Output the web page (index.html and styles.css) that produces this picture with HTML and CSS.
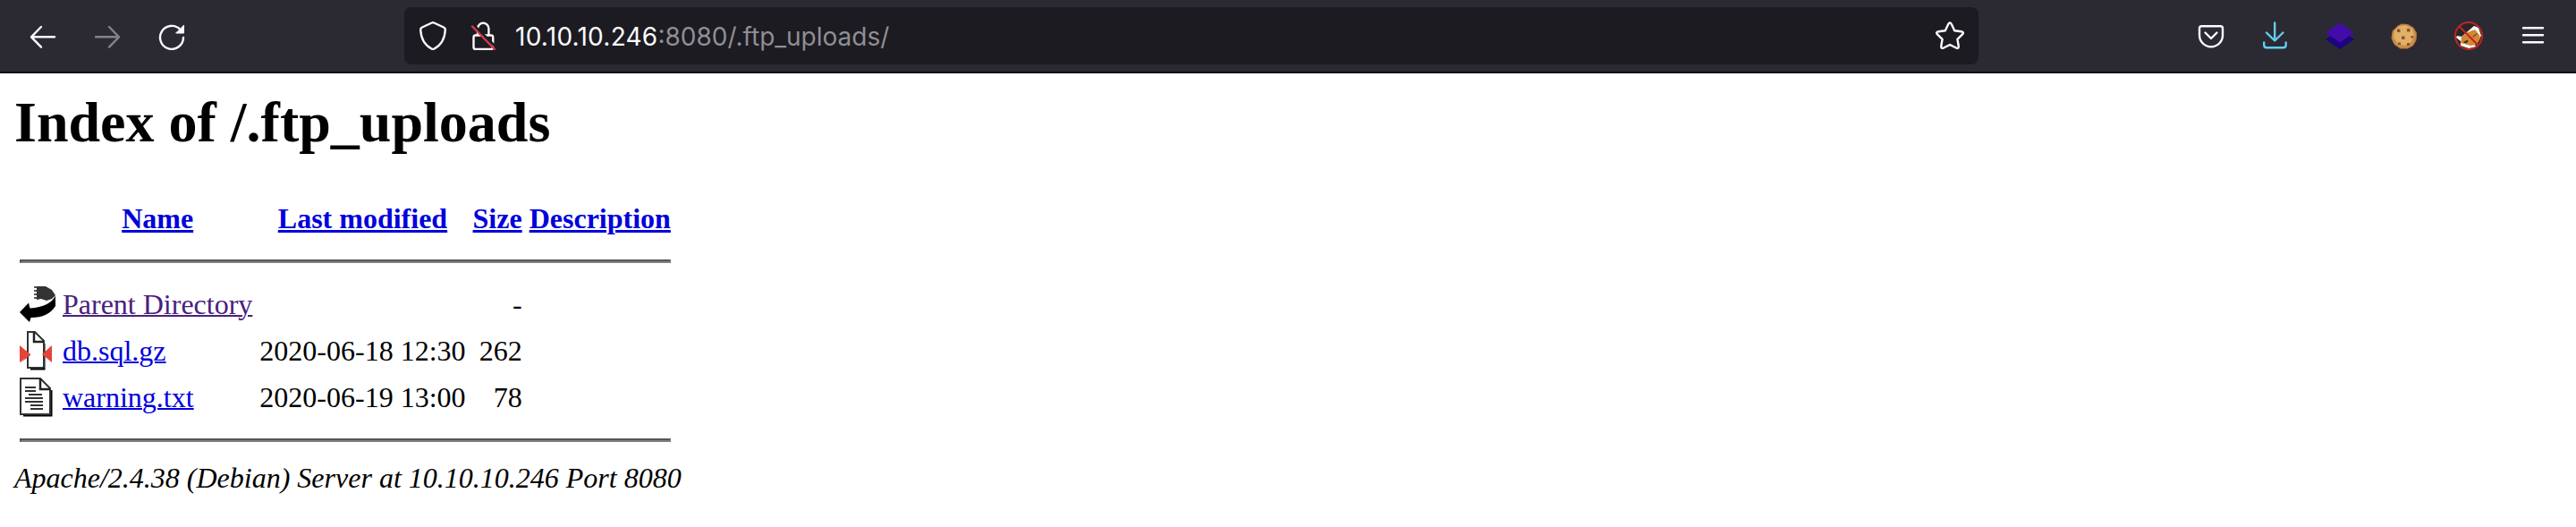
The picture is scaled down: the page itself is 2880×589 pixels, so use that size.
FILE: index.html
```html
<!DOCTYPE html>
<html lang="en">
<head>
<meta charset="utf-8">
<title>Index of /.ftp_uploads</title>
<link rel="stylesheet" href="styles.css">
</head>
<body>
<header class="toolbar">
  <nav class="nav-buttons">
    <svg class="icon" viewBox="0 0 32 32"><path d="M29 17.300H3.500M14 6 3 17.300l11 11.300"/></svg>
    <svg class="icon disabled" viewBox="0 0 32 32"><path d="M3 17.300h25.500M18 6 29 17.300 18 28.600"/></svg>
    <svg class="icon" viewBox="0 0 32 32"><path d="M25.500 9A13 13 0 1 0 29 18"/><path class="solid" d="M29.500 4.500V13h-8.500z"/></svg>
  </nav>
  <div class="urlbar">
    <svg class="icon" viewBox="0 0 32 32"><path d="M14.800 1.500q1.200-.6 2.400 0L28 6.500q2 1 1.800 3C29.300 18.500 25 26.500 17.500 30.500q-1.500.8-3 0C7 26.500 2.700 18.500 2.200 9.500Q2 7.500 4 6.500z"/></svg>
    <svg class="icon lock" viewBox="0 0 32 32"><path d="M10 15.500V8a6.200 6.200 0 0 1 12.400 0v7.500M8 15.500h17q2.200 0 2.200 2.200v11.100q0 2.200-2.200 2.200H7.700q-2.200 0-2.200-2.200V17.700q0-2.200 2.200-2.200"/><path class="gap" d="M6 4.500 31 29"/><path class="slash" d="M4 5.500 29 31"/></svg>
    <span class="url"><span class="host">10.10.10.246</span>:8080/.ftp_uploads/</span>
    <svg class="icon star" viewBox="0 0 32 32"><path d="M14.200 3q1.800-3 3.600 0l3.400 7.200 7.600 1q3.400.6 1.200 3.200l-5.600 5.400 1.300 7.500q.4 3.600-2.700 2.200L16 26l-7 3.500q-3.100 1.400-2.700-2.200l1.300-7.500L2 14.400q-2.200-2.600 1.200-3.200l7.600-1z"/></svg>
  </div>
  <div class="actions">
    <svg class="icon" viewBox="0 0 32 32"><path d="M5.500 5.300h21q2.500 0 2.500 2.500v7.500a13 13 0 0 1-26 0V7.800q0-2.500 2.500-2.500zM9.500 12.500l6.500 6.500 6.500-6.500"/></svg>
    <svg class="icon download" viewBox="0 0 32 32"><path d="M15.200 1.500v19.500M6 12.500l9.200 9 9.200-9M3.200 23.500v2.700q0 3 3 3h18.500q3 0 3-3v-2.700"/></svg>
    <svg class="icon" viewBox="0 0 32 32"><path class="layer-low" d="M0 20 16 9l16 11-16 11z"/><path class="layer-top" d="M0 12.500 16 1.500l16 11-16 11z"/></svg>
    <svg class="icon" viewBox="0 0 32 32"><path class="cookie" d="M9 5 13 3l7 .5L26 7l3.500 6-.5 8-3.500 6-6 3h-8L5 25.500 2 19l1-8z"/><path class="cookie-light" d="M9 6 17 4l8 4 2 7-3 8-8 4-8-3-4-7 1-6z"/><path class="chips" d="M8 8.500h3.500V12H8zM19 8h3.500v3.500H19zM13 16.500h3.500V20H13zM23.500 16H26v2.500h-2.500zM9 23.500h3V26H9zM19 24h3v3h-3z"/></svg>
    <svg class="icon" viewBox="0 0 32 32"><circle class="fox-bg" cx="16" cy="16" r="14"/><path class="white" d="M22 5 27 7l3 9-6 8 2 4-10 2-9-3 0-5-5-4 1-2 5 1z"/><path class="fur" d="M8 17l7-5 8-3 5 6 1 4-4 7-7 1-11-3z"/><path class="eyes" d="M11 23l4-2-1 2.500zM21 17l4-3M24 26h2v1h-2z"/><circle class="ban" cx="16" cy="16" r="15"/><path class="ban" d="m6 6 20 20"/></svg>
    <svg class="icon" viewBox="0 0 32 32"><path class="menu" d="M5 7.200h22M5 15.200h22M5 23.200h22"/></svg>
  </div>
</header>
<main class="page">
  <h1>Index of /.ftp_uploads</h1>
  <table>
    <tr><th><div class="file-icon"></div></th><th><a href="#">Name</a></th><th><a href="#">Last modified</a></th><th><a href="#">Size</a></th><th><a href="#">Description</a></th></tr>
    <tr><th colspan="5"><hr></th></tr>
    <tr>
      <td><svg class="file-icon" viewBox="0 0 40 44"><path class="back-shade" d="M19 2 29 2 36 6 40 12 36 16 30 18 24 16 19 17z"/><path class="back-dots" d="M17.500 2v16"/><path d="M0 31 10 20.500 11.500 26.500Q34 25 40 12.500V24Q32 37 12.500 37L11 42z"/></svg></td>
      <td><a class="visited" href="#">Parent Directory</a></td><td>&nbsp;</td><td class="num">-</td><td>&nbsp;</td>
    </tr>
    <tr>
      <td><svg class="file-icon" viewBox="0 0 40 44"><path class="shadow" d="M12 42h15V14"/><path class="sheet" d="M9 1h8l10 10v29l-1 1H9z"/><path class="fold" d="M16 1v11h11"/><path class="arrow-shade" d="M0 36l12-9v-2zM36 36l-11-9z"/><path class="arrow" d="M0 16 12 26 0 35zM36 16 25 26l11 9z"/></svg></td>
      <td><a href="#">db.sql.gz</a></td><td class="num">2020-06-18 12:30</td><td class="num">262</td><td>&nbsp;</td>
    </tr>
    <tr>
      <td><svg class="file-icon" viewBox="0 0 40 44"><path class="shadow" d="M4 42h31V14"/><path class="sheet" d="M1 1h22l11 11v29H1z"/><path class="fold" d="M23 1v12h11"/><path class="lines" d="M6 11h12M6 15h12M10 19h15M6 23h20M6 27h20M12 31h14M12 35h14"/></svg></td>
      <td><a href="#">warning.txt</a></td><td class="num">2020-06-19 13:00</td><td class="num">78</td><td>&nbsp;</td>
    </tr>
    <tr><th colspan="5"><hr></th></tr>
  </table>
  <address>Apache/2.4.38 (Debian) Server at 10.10.10.246 Port 8080</address>
</main>
</body>
</html>
```
FILE: styles.css
```css
body {
  margin: 0;
  background: #fff;
  color: #000;
  font: 32px "Liberation Serif", "Times New Roman", serif;
}

.toolbar {
  box-sizing: border-box;
  height: 82px;
  padding: 8px 32px 8px;
  border-bottom: 2px solid #0c0c0d;
  background: #2b2a33;
  display: flex;
}

.nav-buttons,
.actions,
.urlbar {
  display: flex;
  align-items: center;
  height: 64px;
}

.nav-buttons {
  gap: 40px;
  width: 420px;
}

.urlbar {
  box-sizing: border-box;
  width: 1760px;
  padding: 0 16px;
  border-radius: 8px;
  background: #1c1b22;
}

.lock {
  margin-left: 24px;
}

.url {
  margin-left: 20px;
  padding-top: 2px;
  font: 28px Inter, sans-serif;
  color: #8f8f94;
  white-space: nowrap;
}

.host {
  color: #fbfbfe;
  letter-spacing: 0.25px;
}

.star {
  margin-left: auto;
}

.actions {
  gap: 40px;
  margin-left: auto;
}

.icon {
  width: 32px;
  height: 32px;
  flex: none;
  fill: none;
  stroke: #fbfbfe;
  stroke-width: 2.4;
  stroke-linecap: round;
  stroke-linejoin: round;
}

.disabled { opacity: 0.42; }
.icon .solid { fill: #fbfbfe; stroke-width: 1; }
.icon .gap { stroke: #1c1b22; stroke-width: 3; }
.icon .slash { stroke: #d93a48; }
.download { stroke: #62cdf0; }
.icon .layer-low { fill: #1b0580; stroke: none; }
.icon .layer-top { fill: #430ca8; stroke: none; }
.icon .cookie { fill: #c98d49; stroke: #b87a39; stroke-width: 1; }
.icon .cookie-light { fill: #e0b069; stroke: none; }
.icon .chips { fill: #8a552b; stroke: none; }
.icon .fox-bg { fill: #28262b; stroke: none; }
.icon .white { fill: #fff; stroke: none; }
.icon .fur { fill: #d48634; stroke: none; }
.icon .eyes { fill: #222; stroke: #333; stroke-width: 1; }
.icon .ban { stroke: #bd2721; stroke-width: 2; }

.page {
  padding: 18px 16px 0;
}

h1 {
  margin: 0 0 42px;
  font-size: 64px;
  line-height: 74px;
}

table {
  border-spacing: 4px;
}

th,
td {
  padding: 2px;
}

td { white-space: nowrap; }
.num { text-align: right; }

a {
  color: #0000dc;
  text-decoration-thickness: 2px;
}

th a { text-decoration-thickness: 3px; }
a.visited { color: #49207e; }

hr {
  box-sizing: border-box;
  height: 4px;
  margin: 16px 0;
  border: 2px solid;
  border-color: #555 #808080 #808080 #555;
}

.file-icon {
  display: block;
  width: 40px;
  height: 44px;
}

.back-shade { fill: #333; }
.back-dots { fill: none; stroke: #555; stroke-width: 3; stroke-dasharray: 2 2; }
.shadow { fill: none; stroke: #000; stroke-width: 3; }
.sheet { fill: #fff; stroke: #333; stroke-width: 2; }
.fold { fill: none; stroke: #222; stroke-width: 2.5; }
.arrow { fill: #e5433b; }
.arrow-shade { fill: #a33; }
.lines { stroke: #333; stroke-width: 2; }
```
